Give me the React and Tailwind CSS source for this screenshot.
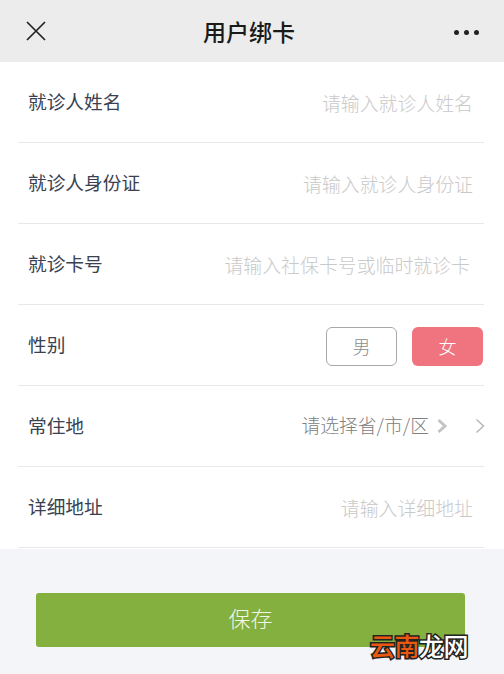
const cjk = { fontFamily: '"Noto Sans CJK SC", "Liberation Sans", sans-serif' };

function Row({ label, placeholder, right, pad = "pr-[11px]" }) {
  return (
    <div className="h-[81px] ml-[18px] mr-[20px] flex items-center justify-between border-b border-[#e8e8e8]">
      <span className="pl-[10px] text-[18.7px] leading-[26px] text-[#3a4150] -mt-[3px]">{label}</span>
      {right || (
        <span className={`${pad} pt-[1px] text-[18.9px] leading-[26px] text-[#c9c9c9] font-light`}>{placeholder}</span>
      )}
    </div>
  );
}

export default function App() {
  return (
    <div className="relative w-[504px] h-[674px] overflow-hidden bg-[#f4f5f9]" style={cjk}>
      <header className="h-[62px] bg-[#ececec] flex items-center justify-between pl-[26px] pr-[25px]">
        <svg width="20" height="20" viewBox="0 0 20 20" fill="none" stroke="#222" strokeWidth="1.7">
          <path d="M1 1 L19 19 M19 1 L1 19" />
        </svg>
        <h1 className="text-[23px] leading-[30px] text-[#1a1a1a] font-medium -mt-[1px] mr-[2px]">用户绑卡</h1>
        <div className="flex gap-[5px] mt-[2px]">
          <span className="w-[5px] h-[5px] rounded-full bg-[#222]" />
          <span className="w-[5px] h-[5px] rounded-full bg-[#222]" />
          <span className="w-[5px] h-[5px] rounded-full bg-[#222]" />
        </div>
      </header>

      <main className="bg-white h-[487px]">
        <Row label="就诊人姓名" placeholder="请输入就诊人姓名" />
        <Row label="就诊人身份证" placeholder="请输入就诊人身份证" />
        <Row label="就诊卡号" placeholder="请输入社保卡号或临时就诊卡" pad="pr-[14px]" />
        <Row
          label="性别"
          right={
            <div className="flex gap-[15px] mt-[3px] mr-[1px]">
              <div className="w-[71px] h-[39px] rounded-[6px] border border-[#a8a8a8] flex items-center justify-center text-[18px] text-[#8c8c8c] font-light">男</div>
              <div className="w-[71px] h-[39px] rounded-[6px] bg-[#ef7480] flex items-center justify-center text-[18px] text-white font-light">女</div>
            </div>
          }
        />
        <Row
          label="常住地"
          right={
            <div className="flex items-center">
              <span className="text-[18.8px] leading-[26px] text-[#808080] font-light -mt-[3px]">请选择省/市/区</span>
              <svg className="ml-[7px]" width="12" height="16" viewBox="0 0 12 16" fill="none" stroke="#c4c4c4" strokeWidth="3">
                <path d="M2.5 2 L9 8 L2.5 14" />
              </svg>
              <svg className="ml-[27px] mr-[-1px]" width="10" height="16" viewBox="0 0 10 16" fill="none" stroke="#b5b5b5" strokeWidth="1.4">
                <path d="M1.5 1.5 L8.5 8 L1.5 14.5" />
              </svg>
            </div>
          }
        />
        <Row label="详细地址" placeholder="请输入详细地址" />
      </main>

      <div className="pt-[44px] pl-[36px] pr-[39px]">
        <button className="w-full h-[54px] pb-[5px] rounded-[3px] bg-[#83b03f] text-[22px] text-[#f1f6e6] font-light">保存</button>
      </div>

      <div className="absolute left-[370px] top-[630px] text-[25px] leading-[30px] tracking-[-0.5px] font-medium whitespace-nowrap [-webkit-text-stroke:3px_#222] [paint-order:stroke_fill]">
        <span className="text-[#e8590f]">云南</span>
        <span className="text-white">龙网</span>
      </div>
    </div>
  );
}
